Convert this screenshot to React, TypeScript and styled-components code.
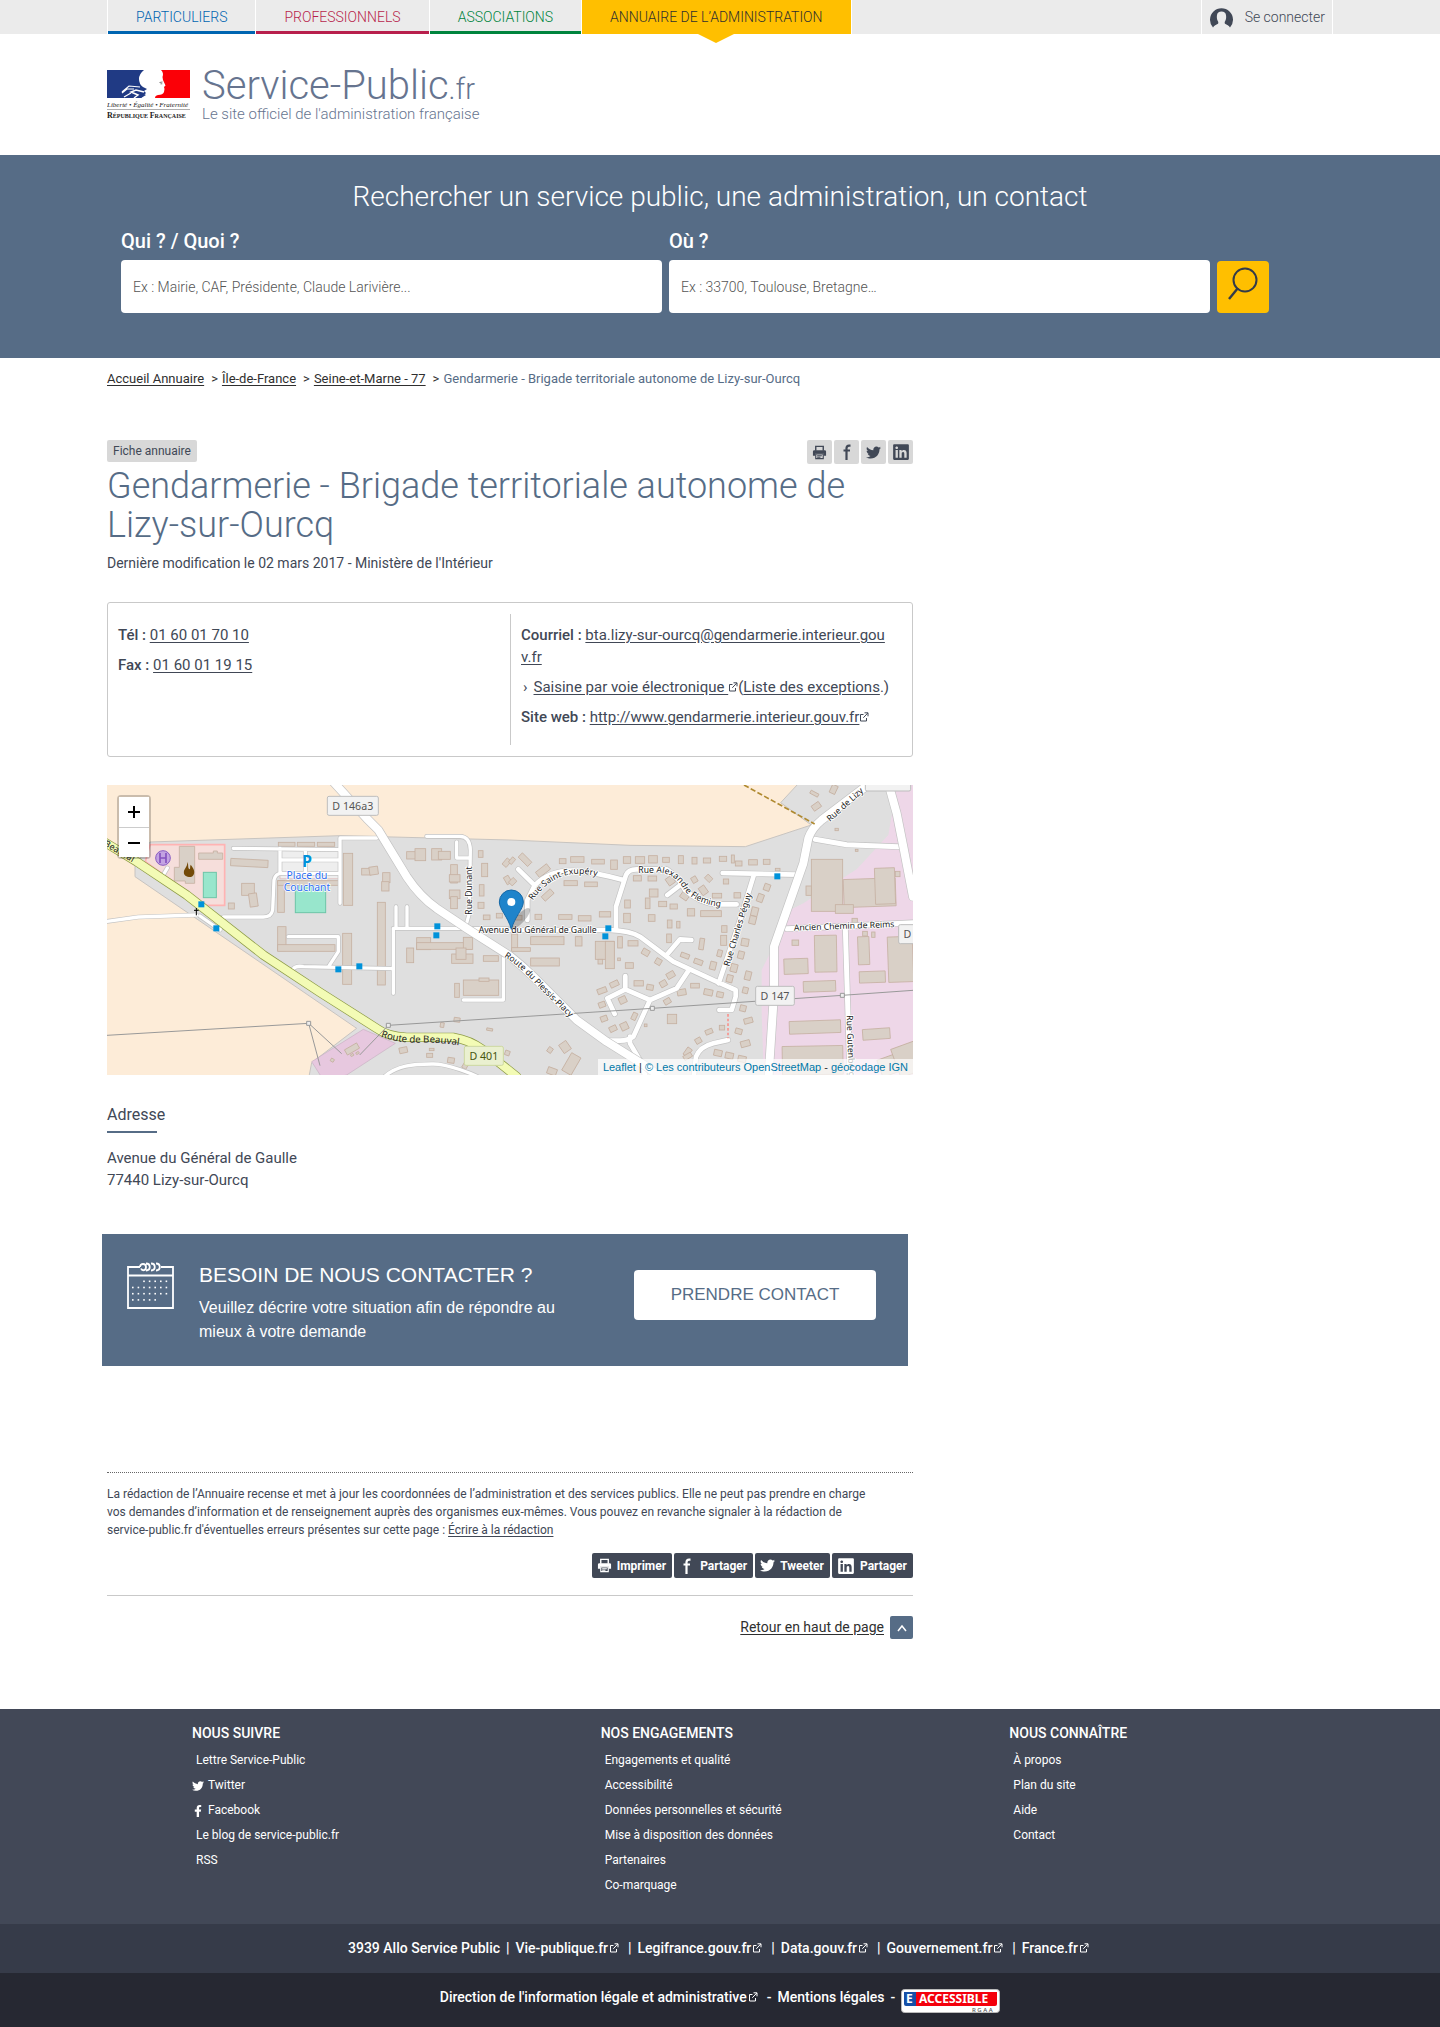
import React from "react";
import styled, { createGlobalStyle, css } from "styled-components";
import { FaFacebookF, FaTwitter, FaLinkedin } from "react-icons/fa";

const color = {
  slate: "#566c86",
  ink: "#414856",
  dark: "#2f2f2f",
  yellow: "#ffbf00",
  grey: "#ebebeb",
  line: "#c9c9c9",
};

const GlobalStyle = createGlobalStyle`
  *, *::before, *::after { box-sizing: border-box; }
  body {
    margin: 0;
    background: #fff;
    color: ${color.ink};
    font-family: Roboto, "Liberation Sans", sans-serif;
    font-size: 15px;
    line-height: 22px;
  }
  a { color: inherit; }
  h1, h2, h3, p, ul, ol { margin: 0; padding: 0; font-weight: 400; }
  ul, ol { list-style: none; }
  button, input { font-family: inherit; }
`;

const Container = styled.div`
  max-width: 1226px;
  margin: 0 auto;
`;

/* ---------- top bar ---------- */

const TopBar = styled.nav`
  background: ${color.grey};
`;
const TopBarInner = styled(Container)`
  display: flex;
  justify-content: space-between;
  height: 34px;
`;
const Tabs = styled.ul`
  display: flex;
  border-left: 1px solid #fff;
`;
const Tab = styled.li<{ $tone: string; $active?: boolean }>`
  position: relative;
  border-right: 1px solid #fff;
  a {
    display: block;
    height: 34px;
    padding: 0 28px;
    border-bottom: 3px solid ${(p) => p.$tone};
    color: ${(p) => p.$tone};
    font-size: 14px;
    font-weight: 300;
    line-height: 34px;
    text-decoration: none;
    text-transform: uppercase;
  }
  ${(p) =>
    p.$active &&
    css`
      a {
        background: ${color.yellow};
        color: ${color.dark};
      }
      &::after {
        content: "";
        position: absolute;
        top: 100%;
        left: 50%;
        margin-left: -18px;
        border: 18px solid transparent;
        border-top: 9px solid ${color.yellow};
        border-bottom: 0;
      }
    `}
`;
const Login = styled.a`
  display: flex;
  align-items: center;
  gap: 12px;
  padding: 0 7px 0 8px;
  border: solid #fff;
  border-width: 0 1px;
  font-size: 14px;
  font-weight: 300;
  text-decoration: none;
`;

/* ---------- header ---------- */

const HeaderInner = styled(Container)`
  display: flex;
  align-items: flex-start;
  gap: 12px;
  padding: 36px 0 29px;
`;
const BrandLink = styled.a`
  color: #66748f;
  font-weight: 300;
  text-decoration: none;
`;
const BrandName = styled.span`
  display: block;
  height: 32px;
  font-size: 40px;
  line-height: 32px;
  small {
    font-size: 29px;
    line-height: 1;
  }
`;
const BrandTag = styled.span`
  display: block;
  font-size: 15px;
  line-height: 24px;
`;

/* ---------- search ---------- */

const SearchBand = styled.section`
  background: ${color.slate};
  color: #fff;
`;
const SearchInner = styled(Container)`
  padding: 24px 64px 45px 14px;
`;
const SearchTitle = styled.h2`
  padding-left: 50px;
  font-size: 28px;
  font-weight: 300;
  line-height: 36px;
  text-align: center;
`;
const SearchForm = styled.form`
  display: flex;
  align-items: flex-end;
  gap: 7px;
  margin-top: 13px;
`;
const Field = styled.div`
  flex: 1;
  label {
    display: block;
    margin-bottom: 6px;
    font-size: 20px;
    font-weight: 500;
    line-height: 26px;
  }
  input {
    display: block;
    width: 100%;
    height: 53px;
    padding: 0 12px;
    border: 0;
    border-radius: 4px;
    background: #fff;
    font-size: 14px;
    font-weight: 300;
  }
  input::placeholder {
    color: #555;
    opacity: 1;
  }
`;
const SearchButton = styled.button`
  display: grid;
  place-items: center;
  width: 52px;
  height: 52px;
  padding: 0 0 6px;
  border: 0;
  border-radius: 4px;
  background: ${color.yellow};
  color: #333b49;
`;

/* ---------- breadcrumb ---------- */

const Breadcrumb = styled.nav`
  padding-top: 12px;
  ol {
    display: flex;
    flex-wrap: wrap;
  }
  li {
    color: ${color.slate};
    font-size: 13px;
    line-height: 18px;
  }
  li + li::before {
    content: ">";
    padding: 0 4px 0 7px;
    color: ${color.dark};
  }
  a {
    color: ${color.dark};
    text-underline-offset: 2px;
  }
`;

/* ---------- main article ---------- */

const Article = styled.main`
  max-width: 806px;
  padding: 52px 0 70px;
`;
const TagRow = styled.div`
  display: flex;
  align-items: flex-start;
  justify-content: space-between;
`;
const Badge = styled.span`
  padding: 0 6px;
  border-radius: 2px;
  background: #d8d8d8;
  font-size: 12px;
`;
const IconRow = styled.ul`
  display: flex;
  gap: 2px;
`;
const IconButton = styled.button`
  display: grid;
  place-items: center;
  width: 25px;
  height: 24px;
  padding: 0;
  border: 0;
  border-radius: 2px;
  background: #d8d8d8;
  color: ${color.ink};
`;
const Title = styled.h1`
  margin-top: 3px;
  color: ${color.slate};
  font-size: 36px;
  font-weight: 300;
  line-height: 39px;
`;
const Meta = styled.p`
  margin-top: 8px;
  font-size: 14px;
  line-height: 20px;
`;

const ContactCard = styled.section`
  display: grid;
  grid-template-columns: 1fr 1fr;
  margin-top: 29px;
  padding: 11px 0;
  border: 1px solid ${color.line};
  border-radius: 3px;
`;
const ContactList = styled.ul`
  display: flex;
  flex-direction: column;
  gap: 8px;
  min-height: 131px;
  padding: 10px 22px 10px 10px;
  & + & {
    border-left: 1px solid ${color.line};
  }
  strong {
    font-weight: 500;
  }
  a {
    text-underline-offset: 2px;
  }
`;
const Email = styled.a`
  word-break: break-all;
`;
const ArrowItem = styled.li`
  white-space: nowrap;
  &::before {
    content: "›";
    padding: 0 6px 0 2px;
  }
`;

const MapFrame = styled.section`
  position: relative;
  margin-top: 28px;
  overflow: hidden;
  aspect-ratio: 806 / 290;
  svg.tiles {
    display: block;
    width: 100%;
    height: 100%;
  }
`;
const ZoomControl = styled.div`
  position: absolute;
  top: 10px;
  left: 10px;
  border: 2px solid rgba(0, 0, 0, 0.2);
  border-radius: 4px;
`;
const ZoomButton = styled.button`
  display: grid;
  place-items: center;
  width: 30px;
  height: 30px;
  padding: 0;
  border: 0;
  background: #fff;
  color: #000;
  & + & {
    border-top: 1px solid #ccc;
  }
`;
const Attribution = styled.p`
  position: absolute;
  right: 0;
  bottom: 0;
  padding: 0 5px;
  background: rgba(255, 255, 255, 0.7);
  color: #333;
  font: 11px/16px "Liberation Sans", Arial, sans-serif;
  a {
    color: #0078a8;
    text-decoration: none;
  }
`;

const AddressTitle = styled.h2`
  margin-top: 30px;
  font-size: 16px;
  line-height: 20px;
  &::after {
    content: "";
    display: block;
    width: 50px;
    height: 2px;
    margin-top: 6px;
    background: ${color.slate};
  }
`;
const Address = styled.p`
  margin-top: 14px;
`;

const Banner = styled.section`
  display: flex;
  align-items: flex-start;
  margin: 43px 5px 0 -5px;
  padding: 28px 32px 22px 24px;
  background: ${color.slate};
  color: #fff;
  font-family: "Liberation Sans", Arial, sans-serif;
`;
const BannerText = styled.div`
  flex: 1;
  padding: 1px 60px 0 24px;
  h2 {
    font-size: 21px;
    line-height: 24px;
  }
  p {
    margin-top: 9px;
    font-size: 16px;
    line-height: 24px;
  }
`;
const BannerButton = styled.button`
  width: 242px;
  height: 50px;
  margin-top: 8px;
  border: 0;
  border-radius: 4px;
  background: #fff;
  color: ${color.slate};
  font-size: 17px;
`;

const Notice = styled.p`
  margin-top: 106px;
  padding: 12px 34px 0 0;
  border-top: 1px dotted #666;
  font-size: 12px;
  line-height: 18px;
  a {
    text-underline-offset: 2px;
  }
`;
const ShareRow = styled.ul`
  display: flex;
  justify-content: flex-end;
  gap: 2px;
  margin-top: 14px;
  padding-bottom: 17px;
  border-bottom: 1px solid ${color.line};
`;
const ShareButton = styled.button`
  display: flex;
  align-items: center;
  gap: 5px;
  height: 25px;
  padding: 0 6px 0 5px;
  border: 0;
  border-radius: 2px;
  background: ${color.ink};
  color: #fff;
  font-size: 12px;
  font-weight: 700;
`;
const BackTop = styled.a`
  display: flex;
  align-items: center;
  justify-content: flex-end;
  gap: 6px;
  margin-top: 20px;
  color: ${color.dark};
  font-size: 14px;
  line-height: 23px;
  text-underline-offset: 2px;
`;
const BackTopIcon = styled.span`
  display: grid;
  place-items: center;
  width: 23px;
  height: 23px;
  border-radius: 2px;
  background: ${color.slate};
  color: #fff;
`;

/* ---------- footer ---------- */

const FooterLinks = styled.div`
  background: #424857;
  color: #fff;
`;
const FooterGrid = styled(Container)`
  display: grid;
  grid-template-columns: repeat(3, 1fr);
  padding: 14px 0 26px;
`;
const FooterColumn = styled.section`
  padding-left: 85px;
  h3 {
    font-size: 14px;
    font-weight: 500;
    line-height: 20px;
    text-transform: uppercase;
  }
  ul {
    margin-top: 5px;
  }
  li {
    font-size: 12px;
    line-height: 25px;
  }
  a {
    display: flex;
    align-items: center;
    gap: 4px;
    text-decoration: none;
  }
`;
const LinkGlyph = styled.span`
  display: grid;
  place-items: center;
  width: 12px;
`;
const PlainLabel = styled.span`
  padding-left: 4px;
`;
const FooterBar = styled.div<{ $bg: string; $pad: string }>`
  display: flex;
  flex-wrap: wrap;
  align-items: flex-start;
  justify-content: center;
  gap: 6px;
  padding: ${(p) => p.$pad};
  background: ${(p) => p.$bg};
  color: #fff;
  font-size: 14px;
  font-weight: 500;
  line-height: 24px;
  a {
    text-decoration: none;
  }
  a > svg {
    margin: 0 3px 0 1px;
  }
`;
const BadgeLink = styled.a`
  padding-top: 4px;
  && > svg {
    display: block;
    margin: 0;
  }
`;

/* ---------- icons ---------- */

const Ext = ({ size = 10 }: { size?: number }) => (
  <svg width={size} height={size} viewBox="0 0 10 10" fill="none" stroke="currentColor" aria-hidden="true">
    <path d="M4.5 2.5H1.5v6.500h6V6M5.500.8H9v3.500M8.800 1L4.300 5.800" />
  </svg>
);

const PrintIcon = ({ size = 15 }: { size?: number }) => (
  <svg width={size} height={size} viewBox="0 0 16 16" fill="none" stroke="currentColor" aria-hidden="true">
    <path d="M4 6V1.500h8V6" strokeWidth="1.500" />
    <path d="M2.500 5.500h11A1.500 1.500 0 0 1 15 7v4.500h-2.500V9h-9v2.500H1V7a1.500 1.500 0 0 1 1.500-1.500z" fill="currentColor" stroke="none" />
    <path d="M4 9.500h8v5H4zM5.500 11.500h5M5.500 13h3.500" strokeWidth="1.200" />
  </svg>
);

const FacebookIcon = ({ size = 16 }: { size?: number }) => (
  <svg width={size} height={size} viewBox="0 0 16 16" fill="none" stroke="currentColor" strokeWidth="2.200" aria-hidden="true">
    <path d="M11.500 1.600H10Q7.500 1.600 7.500 4.200V16M4.500 6.500h6.500" />
  </svg>
);

const UserIcon = () => (
  <svg width="23" height="21" viewBox="0 0 23 21" aria-hidden="true">
    <path
      d="M3 20.500A11.500 11.500 0 1 1 20 20.500c-1-2-3.200-2.800-5-3.800-.5-.6-.4-1.700.2-2.600 1-2 1-3.700.9-5.300C16 5.800 14 4.500 11.500 4.500S7 5.800 6.900 8.800c-.1 1.600-.1 3.300.9 5.300.6.900.7 2 .2 2.600-1.800 1-4 1.800-5 3.800z"
      fill={color.ink}
    />
  </svg>
);

const SearchIcon = () => (
  <svg width="32" height="36" viewBox="0 0 32 36" fill="none" stroke="currentColor" strokeWidth="2" aria-hidden="true">
    <circle cx="18" cy="14" r="11.500" />
    <path d="M11 22L2 33" strokeWidth="2.400" />
  </svg>
);

const CalendarIcon = () => {
  const dots: React.ReactElement[] = [];
  for (let r = 0; r < 4; r++)
    for (let c = 0; c < 7; c++) {
      if ((r === 0 && c < 2) || (r === 3 && c > 4)) continue;
      dots.push(<rect key={`${r}-${c}`} x={6 + c * 5.6} y={18.500 + r * 6.2} width="1.600" height="1.600" />);
    }
  return (
    <svg width="49" height="48" viewBox="0 0 49 48" fill="none" stroke="#fff" strokeWidth="1.800" aria-hidden="true">
      <path d="M14 5H2v41h45V5H35M2 13.500h45" />
      <path d="M14 5c0-4 6-4 6 0s-4 4-5 1.500M20 1.500c5 0 5 7 0 7M25 1.500c5 0 5 7 0 7M30 1.500c5 0 5 7 0 7" />
      <g fill="#fff" stroke="none">{dots}</g>
    </svg>
  );
};

const FlagLogo = () => (
  <svg width="83" height="50" viewBox="0 0 83 50" role="img" aria-label="République Française">
    <path d="M0 0h37Q32 4 32 9Q32 14 36 17L40 19 37 21 39 23 34 28H0z" fill="#203a84" />
    <g fill="none" stroke="#fff">
      <path d="M33 17L22 16 15 22M27 19L20 19 15 23M24 23L17 27" strokeWidth="1.200" />
      <path d="M37 22L29 20 24 22 31 25 27 28" strokeWidth="1.500" />
    </g>
    <path d="M35 23l4 2-5 3h-4z" fill="#203a84" />
    <path d="M54 0Q57 3 55.500 7L56 10 58.500 15.500 57 17 57.500 19 57 22Q56 25 51 25Q48 25.500 48 28H83V0z" fill="#fb0007" />
    <path d="M52.500 12.500l3-.5M53.500 13.800h1.800" stroke="#444" strokeWidth=".7" />
    <g fontFamily="Liberation Serif, serif" fill="#222">
      <text x="0" y="36.500" fontSize="7" fontStyle="italic">Liberté • Égalité • Fraternité</text>
      <text x="0" y="48" fontSize="8" fontWeight="700">
        R<tspan fontSize="6">ÉPUBLIQUE </tspan>F<tspan fontSize="6">RANÇAISE</tspan>
      </text>
    </g>
    <path d="M0 39.500h83" stroke="#999" strokeWidth=".8" />
  </svg>
);

const RgaaBadge = () => (
  <svg width="99" height="24" viewBox="0 0 99 24" role="img" aria-label="E-accessible RGAA">
    <rect x=".5" y=".5" width="98" height="23" rx="3" fill="#fff" stroke="#bbb" />
    <path d="M3 3h12v14H5a2 2 0 0 1-2-2z" fill="#1650a8" />
    <path d="M15 3h81v12a2 2 0 0 1-2 2H15z" fill="#f4000c" />
    <g fontFamily="Noto Sans, sans-serif" fill="#fff" fontWeight="700" fontSize="12">
      <text x="5" y="14">E</text>
      <text x="18" y="14">ACCESSIBLE</text>
    </g>
    <text x="71" y="22.500" fontFamily="Noto Sans, sans-serif" fontSize="6" fill="#555">R G A A</text>
  </svg>
);

/* ---------- map drawing ---------- */

/* [x, y, width, height, rotation] */
type Box = [number, number, number, number, number?];

const westBuildings: Box[] = [
  [535, 187, 50, 12], [592, 187, 52, 12], [652, 187, 52, 12],
  [392, 238, 112, 22, 3], [730, 220, 28, 156], [533, 302, 20, 95], [533, 302, 185, 14],
  [728, 460, 27, 153], [832, 367, 24, 248], [533, 440, 25, 72], [533, 494, 172, 20],
  [425, 310, 38, 36], [448, 340, 24, 40, -8], [385, 369, 18, 18],
  [785, 265, 28, 20], [808, 260, 26, 24, -8], [848, 278, 22, 30], [845, 305, 22, 28],
  [920, 215, 50, 22], [945, 206, 32, 36], [995, 206, 30, 34], [1015, 214, 36, 24],
  [1052, 254, 20, 55], [1048, 284, 32, 22], [1048, 330, 32, 26], [1052, 350, 20, 36],
  [1135, 212, 14, 20], [1145, 250, 18, 40], [1138, 314, 14, 34], [1134, 367, 18, 18],
  [1150, 405, 20, 14], [1189, 400, 18, 14], [1212, 236, 16, 24, 40], [1215, 288, 16, 24, -30],
  [920, 504, 21, 44], [950, 473, 42, 36], [950, 488, 165, 20], [1090, 472, 28, 36],
  [1055, 522, 64, 28], [1068, 504, 30, 34], [1150, 527, 45, 17], [1090, 600, 106, 46],
  [1064, 610, 14, 42], [1137, 594, 30, 10], [1062, 713, 18, 13, 8], [1021, 728, 11, 14, 8],
  [1160, 745, 18, 7, 10], [898, 802, 24, 17, -12], [980, 820, 18, 12], [1043, 833, 20, 16, 8],
  [1088, 850, 14, 16, 30], [988, 805, 14, 7], [735, 798, 42, 18, -30], [692, 836, 10, 9, 30],
  [752, 822, 9, 6, -30], [768, 816, 9, 6, -30], [1215, 812, 14, 14, 20],
];

const eastBuildings: Box[] = [
  [25, 230, 40, 18, 45], [78, 262, 42, 20, -38], [95, 336, 36, 18, -42], [0, 232, 12, 20, 40], [0, 295, 16, 20, 45],
  [148, 236, 20, 15], [182, 230, 40, 17], [245, 238, 38, 14], [302, 240, 20, 28], [340, 230, 22, 20],
  [376, 230, 28, 20], [416, 227, 26, 22], [458, 232, 20, 15], [505, 227, 15, 24], [546, 232, 15, 20], [580, 234, 22, 15],
  [628, 229, 22, 15], [664, 225, 9, 24], [676, 243, 20, 15], [716, 239, 26, 16], [760, 238, 20, 15],
  [162, 302, 40, 15], [224, 306, 38, 14], [370, 287, 24, 16], [414, 288, 26, 15], [470, 290, 22, 24, -35],
  [512, 338, 24, 20, 35], [545, 290, 16, 18, -30], [570, 318, 20, 26, -35], [588, 285, 16, 20, -45],
  [607, 340, 28, 14], [640, 297, 16, 15], [672, 338, 20, 16], [418, 327, 26, 24], [406, 354, 14, 32],
  [446, 364, 24, 16], [480, 372, 22, 15], [532, 386, 22, 22], [572, 392, 62, 18], [344, 360, 17, 24], [341, 400, 20, 28],
  [268, 395, 34, 16], [75, 403, 20, 15], [146, 404, 40, 14], [205, 407, 38, 16], [16, 406, 20, 14],
  [415, 404, 20, 20], [472, 420, 14, 24], [500, 424, 10, 20], [470, 462, 14, 26], [568, 475, 14, 34, 8],
  [762, 312, 18, 20, 20], [742, 342, 18, 24, 20], [724, 382, 20, 26, 14], [718, 408, 20, 24, 14],
  [635, 437, 16, 20], [632, 466, 18, 30], [622, 510, 14, 20, 14], [600, 545, 18, 24, 14], [694, 476, 22, 22, 10],
  [684, 514, 18, 22, 14], [662, 552, 20, 24, 14], [650, 585, 18, 22, 14], [705, 574, 18, 26, 14], [698, 622, 16, 18, 14],
  [690, 676, 18, 18, 14], [5, 462, 18, 50], [5, 503, 56, 11], [62, 470, 100, 24], [62, 534, 86, 24],
  [196, 470, 20, 28], [256, 484, 56, 54], [286, 484, 27, 82], [264, 538, 14, 14], [323, 470, 14, 34],
  [354, 482, 30, 16], [396, 508, 22, 18, 30], [436, 536, 18, 18, 30], [346, 548, 24, 17], [512, 520, 26, 14, 20],
  [552, 538, 26, 15, 20], [300, 604, 26, 16, -25], [262, 624, 28, 16, -20], [266, 666, 20, 16, -20],
  [272, 708, 20, 16, -20], [327, 650, 22, 20, -25], [372, 602, 28, 16], [410, 614, 20, 16, 10], [450, 602, 20, 18, -30],
  [470, 576, 24, 18, -30], [502, 628, 26, 18, -10], [542, 610, 26, 14], [582, 628, 26, 18, 12], [620, 636, 20, 16, 12],
  [462, 656, 20, 16, -30], [366, 698, 14, 22, 25], [298, 738, 22, 16, -25], [332, 728, 22, 22, -25], [472, 703, 28, 28],
  [586, 748, 22, 14, -22], [556, 774, 18, 16, -30], [525, 803, 16, 26, 35], [520, 822, 26, 14, -30], [628, 736, 16, 14],
  [702, 714, 26, 16, -15], [676, 746, 20, 16, 15], [692, 782, 28, 18, -15], [612, 810, 24, 18, 12], [646, 818, 24, 18, 12],
  [684, 828, 24, 18, 12], [152, 786, 26, 30, -35], [168, 822, 32, 60, 30], [113, 802, 14, 16, 35], [112, 864, 28, 20, 20],
  [904, 238, 94, 156], [1001, 296, 156, 84, -2], [1095, 264, 60, 108, -2], [888, 318, 16, 28], [976, 374, 54, 26],
  [914, 466, 66, 110, -1], [822, 536, 72, 46, -2], [880, 603, 97, 32, -2], [1044, 470, 34, 84, -2], [1048, 574, 78, 34, -2],
  [1134, 470, 75, 136, -2], [838, 722, 154, 38, -2], [817, 798, 182, 86, -1], [1058, 746, 82, 32, -4],
  [1108, 830, 56, 54, -20], [1155, 792, 80, 90, -20], [846, 480, 20, 16], [900, 36, 26, 10, 28], [962, 15, 18, 26, 25],
  [906, 70, 26, 18, -35], [1036, 208, 8, 6], [975, 145, 10, 7], [1026, 415, 16, 16], [1156, 274, 14, 16],
  [796, 265, 14, 8], [403, 732, 8, 8], [323, 534, 8, 8], [1058, 454, 14, 14], [1085, 456, 10, 16],
];

const Buildings = ({ items }: { items: Box[] }) => (
  <g fill="#d9d0c7" stroke="#c6b1a2" strokeWidth="2.500">
    {items.map(([x, y, w, h, r = 0], i) => (
      <rect key={i} x={x} y={y} width={w} height={h} transform={r ? `rotate(${r} ${x + w / 2} ${y + h / 2})` : undefined} />
    ))}
  </g>
);

const minorRoads = [
  "M21 424L115 411L290 405",
  "M300 408L360 450L370 414L370 411H490Q514 411 518 390L522 300Q526 280 545 280H720",
  "M400 205L720 209M540 205V280M616 209V280M540 240H720M720 370V174H830",
  "M565 470H715V515L688 556",
  "M580 566Q590 556 610 560L880 566M880 640V445H1090M888 380V445M921 380V445",
  "M980 169H1080Q1110 170 1111 210L1108 400L1098 436M1070 186V234H1108",
  "M1090 660H1210V530M1100 446H1238M188 288L202 264",
  "M840 905C880 850 960 852 1000 852S1120 880 1150 900",
];
const streets = [
  "M1230 450H1530Q1590 452 1620 470L1720 545L1850 605L1907 630V650L1895 690H1858",
  "M1255 268L1304 316L1282 360V420M1304 316Q1350 270 1420 272Q1490 278 1570 300",
  "M1548 448V380L1578 285Q1585 268 1610 268H1700Q1735 290 1755 330Q1800 370 1850 373H1910",
  "M1702 345L1745 312M1868 279L2090 284M1962 284L1920 420L1856 610",
  "M1700 525L1740 478L1774 480",
  "M1764 574L1730 625L1650 660L1600 770Q1585 782 1560 782H1510M1650 660L1576 628L1522 655L1544 702M1576 630V588",
  "M1590 770V790L1622 845L1640 900M1884 780L1840 790Q1800 800 1788 830L1780 900",
];
const mainRoads = [
  "M695 0L800 115L835 150L920 290Q960 350 1010 385L1100 445L1230 528Q1270 560 1300 590L1430 720L1520 785L1640 860L1700 905",
  "M2310 10L2165 120Q2135 145 2125 175L2110 250L2022 500V640L2005 900",
];
const sideRoads = [
  "M2145 178L2240 194L2395 200",
  "M2060 446L2180 441L2439 428M2236 446L2250 900",
];

const Road = ({ d, width, fill = "#fff", edge = "#c3c3c3" }: { d: string[]; width: number; fill?: string; edge?: string }) => (
  <g fill="none" strokeLinecap="round" strokeLinejoin="round">
    <path d={d.join("")} stroke={edge} strokeWidth={width + 4} />
    <path d={d.join("")} stroke={fill} strokeWidth={width} />
  </g>
);

const shields: [string, number, number, number, boolean?][] = [
  ["D 146a3", 682, 49, 153],
  ["D 401", 1093, 799, 117, true],
  ["D 147", 1967, 619, 116],
  ["D 147E", 2296, -24, 136],
  ["D 147", 2396, 434, 116],
];

const stops = [
  [295, 364], [340, 436], [1003, 430], [1000, 457], [706, 559], [769, 550], [1516, 436], [1507, 460], [2023, 280],
];

const MapTiles = () => (
  <svg className="tiles" viewBox="21 15 2418 870" preserveAspectRatio="xMidYMid slice" role="img" aria-label="Plan de Lizy-sur-Ourcq">
    <defs>
      <path id="saint-exupery" d="M1298 362Q1330 315 1375 294T1490 288" />
      <path id="fleming" d="M1615 278H1670Q1725 278 1752 330Q1790 375 1875 382" />
      <path id="plessis" d="M1212 530Q1260 560 1300 604T1420 722" />
      <path id="beauval" d="M842 770Q900 790 960 788T1100 800" />
      <path id="beauval-west" d="M10 196L112 256" />
    </defs>
    <rect x="0" y="0" width="2500" height="900" fill="#dfdfdf" />
    <g stroke="#c8c4c0" strokeWidth="3">
      <path d="M0 0H2105L2042 68L2134 135L1936 200L1590 196L1230 180L720 167L150 186L112 250L0 175z" fill="#fdecd8" />
      <path d="M0 180L105 250V290L770 745L635 848L625 900H0z" fill="#fdecd8" />
    </g>
    <path d="M2450 0H2370L2378 90L2365 165L2270 268L2110 370L2050 400L2020 500L1985 570V700L1992 900H2450z" fill="#eed7e8" />
    <path d="M635 845L790 748L886 790L740 885L670 900z" fill="#e7c8df" stroke="#c9b0c3" strokeWidth="2" />
    <path d="M150 194H374V376H320L136 245z" fill="#f6dedb" stroke="#ffb3b3" strokeWidth="5" />
    <path d="M540 209H718V296H540z" fill="#eee" stroke="#e0b7b7" strokeWidth="2" />
    <path d="M238 199H284V310H256V303H223V262H238zM296 219H340V213H352V219H368V238H296z" fill="#d9d0c7" stroke="#c6b1a2" strokeWidth="2.500" />
    <g fill="#98e6cc" stroke="#6cc5a7" strokeWidth="3">
      <rect x="310" y="277" width="39" height="76" />
      <rect x="586" y="316" width="91" height="82" />
    </g>
    <Buildings items={westBuildings} />
    <g transform="translate(1230 0)">
      <Buildings items={eastBuildings} />
    </g>
    <Road d={minorRoads} width={10} />
    <Road d={streets} width={14} />
    <Road d={sideRoads} width={15} />
    <Road d={["M2365 10L2390 100L2410 200L2439 350"]} width={24} />
    <Road d={mainRoads} width={24} />
    <Road d={["M0 178L110 245L260 345L490 525L660 637L830 745Q860 768 920 772L1060 772Q1110 780 1150 810L1250 890"]} width={24} fill="#f3fbb5" edge="#8d9b45" />
    <g fill="none" stroke="#999" strokeWidth="3">
      <path d="M21 766L626 730L725 821M626 730L660 857M779 825L865 736L1657 685L2227 646L2439 631" />
      <path d="M620 724h12v12h-12zM859 730h12v12h-12zM1651 679h12v12h-12zM2221 640h12v12h-12z" fill="#eee" />
    </g>
    <path d="M1932 15L2144 132" stroke="#b08a30" strokeWidth="5" strokeDasharray="16 7" />
    <path d="M1884 702V775" stroke="#ff8078" strokeWidth="4" strokeDasharray="8 6" />
    {stops.map(([x, y]) => (
      <rect key={`${x}-${y}`} x={x} y={y} width="18" height="18" fill="#0092da" />
    ))}
    <path d="M289 384v22M282 391h14" stroke="#000" strokeWidth="3" />
    <path d="M262 246c5 10 0 18 7 22 3-4 0-8 3-14 10 12 14 22 8 32-5 6-9 5-13 5-12-1-17-9-15-18 2-8 10-12 10-27z" fill="#734a08" />
    <circle cx="189" cy="234" r="22" fill="#c3a3e2" stroke="#8a5cc2" strokeWidth="3" />
    <path d="M180 219v30M198 219v30M180 234h18" stroke="#8552bf" strokeWidth="5" />
    <g fontFamily="Noto Sans, sans-serif" fontSize="26" fill="#222" stroke="#fff" strokeWidth="5" paintOrder="stroke" strokeLinejoin="round">
      <text><textPath href="#saint-exupery">Rue Saint-Exupéry</textPath></text>
      <text><textPath href="#fleming">Rue Alexandre Fleming</textPath></text>
      <text><textPath href="#plessis">Route du Plessis-Placy</textPath></text>
      <text stroke="none" fontSize="29"><textPath href="#beauval">Route de Beauval</textPath></text>
      <text stroke="none" fontSize="27"><textPath href="#beauval-west">Beauval</textPath></text>
      <text x="1136" y="458">Avenue du Général de Gaulle</text>
      <text transform="translate(1116 404) rotate(-90)">Rue Dunant</text>
      <text transform="translate(1888 560) rotate(-73)">Rue Charles Péguy</text>
      <text transform="translate(2190 126) rotate(-42)">Rue de Lizy</text>
      <text transform="translate(2082 452) rotate(-2)">Ancien Chemin de Reims</text>
      <text transform="translate(2240 706) rotate(88)">Rue Gutenberg</text>
    </g>
    <g fontFamily="Noto Sans, sans-serif" textAnchor="middle" fill="#2d6cf0" stroke="#fff" strokeWidth="4" paintOrder="stroke">
      <text x="621" y="298" fontSize="31">Place du</text>
      <text x="621" y="334" fontSize="31">Couchant</text>
      <text x="621" y="262" fontSize="48" fontWeight="700" fill="#0092da" stroke="none">P</text>
    </g>
    {shields.map(([label, x, y, w, green], i) => (
      <g key={i}>
        <rect x={x} y={y} width={w} height="57" rx="5" fill={green ? "#eaf0d0" : "#f2f2f2"} stroke={green ? "#cdd8a0" : "#bdbdbd"} strokeWidth="3" />
        <text x={x + w / 2} y={y + 40} textAnchor="middle" fontFamily="Noto Sans, sans-serif" fontSize="32" fill={green ? "#47560f" : "#555"}>
          {label}
        </text>
      </g>
    ))}
    <ellipse cx="1262" cy="415" rx="40" ry="13" transform="rotate(-48 1262 415)" fill="#000" opacity=".22" />
    <path d="M1234 448C1224 410 1198 388 1198 366a36 36 0 0 1 72 0C1270 388 1244 410 1234 448z" fill="#1f84cb" stroke="#1668a6" strokeWidth="3" />
    <circle cx="1234" cy="366" r="12" fill="#fff" />
  </svg>
);

/* ---------- page data ---------- */

const tabs = [
  { label: "Particuliers", tone: "#0065b1" },
  { label: "Professionnels", tone: "#b81f4c" },
  { label: "Associations", tone: "#00843d" },
  { label: "Annuaire de l’administration", tone: color.yellow, active: true },
];

const shares = [
  { label: "Imprimer", icon: <PrintIcon /> },
  { label: "Partager", icon: <FacebookIcon /> },
  { label: "Tweeter", icon: <FaTwitter size={15} /> },
  { label: "Partager", icon: <FaLinkedin size={18} /> },
];

const columns: { title: string; links: { label: string; icon?: React.ReactElement }[] }[] = [
  {
    title: "Nous suivre",
    links: [
      { label: "Lettre Service-Public" },
      { label: "Twitter", icon: <FaTwitter size={12} /> },
      { label: "Facebook", icon: <FaFacebookF size={12} /> },
      { label: "Le blog de service-public.fr" },
      { label: "RSS" },
    ],
  },
  {
    title: "Nos engagements",
    links: [
      { label: "Engagements et qualité" },
      { label: "Accessibilité" },
      { label: "Données personnelles et sécurité" },
      { label: "Mise à disposition des données" },
      { label: "Partenaires" },
      { label: "Co-marquage" },
    ],
  },
  {
    title: "Nous connaître",
    links: [{ label: "À propos" }, { label: "Plan du site" }, { label: "Aide" }, { label: "Contact" }],
  },
];

const partners = ["Vie-publique.fr", "Legifrance.gouv.fr", "Data.gouv.fr", "Gouvernement.fr", "France.fr"];

export default function App() {
  return (
    <>
      <GlobalStyle />
      <TopBar>
        <TopBarInner>
          <Tabs>
            {tabs.map((t) => (
              <Tab key={t.label} $tone={t.tone} $active={t.active}>
                <a href="#">{t.label}</a>
              </Tab>
            ))}
          </Tabs>
          <Login href="#">
            <UserIcon />
            Se connecter
          </Login>
        </TopBarInner>
      </TopBar>

      <header>
        <HeaderInner>
          <FlagLogo />
          <BrandLink href="#">
            <BrandName>
              Service-Public<small>.fr</small>
            </BrandName>
            <BrandTag>Le site officiel de l'administration française</BrandTag>
          </BrandLink>
        </HeaderInner>
      </header>

      <SearchBand>
        <SearchInner>
          <SearchTitle>Rechercher un service public, une administration, un contact</SearchTitle>
          <SearchForm onSubmit={(e) => e.preventDefault()}>
            <Field>
              <label htmlFor="who">Qui ? / Quoi ?</label>
              <input id="who" placeholder="Ex : Mairie, CAF, Présidente, Claude Larivière..." />
            </Field>
            <Field>
              <label htmlFor="where">Où ?</label>
              <input id="where" placeholder="Ex : 33700, Toulouse, Bretagne…" />
            </Field>
            <SearchButton type="submit" aria-label="Rechercher">
              <SearchIcon />
            </SearchButton>
          </SearchForm>
        </SearchInner>
      </SearchBand>

      <Container>
        <Breadcrumb aria-label="Fil d’Ariane">
          <ol>
            <li><a href="#">Accueil Annuaire</a></li>
            <li><a href="#">Île-de-France</a></li>
            <li><a href="#">Seine-et-Marne - 77</a></li>
            <li>Gendarmerie - Brigade territoriale autonome de Lizy-sur-Ourcq</li>
          </ol>
        </Breadcrumb>

        <Article>
          <TagRow>
            <Badge>Fiche annuaire</Badge>
            <IconRow>
              {shares.map((s, i) => (
                <li key={i}>
                  <IconButton type="button" aria-label={s.label}>{s.icon}</IconButton>
                </li>
              ))}
            </IconRow>
          </TagRow>
          <Title>Gendarmerie - Brigade territoriale autonome de Lizy-sur-Ourcq</Title>
          <Meta>Dernière modification le 02 mars 2017 - Ministère de l'Intérieur</Meta>

          <ContactCard>
            <ContactList>
              <li><strong>Tél :</strong> <a href="#">01 60 01 70 10</a></li>
              <li><strong>Fax :</strong> <a href="#">01 60 01 19 15</a></li>
            </ContactList>
            <ContactList>
              <li>
                <strong>Courriel :</strong> <Email href="#">bta.lizy-sur-ourcq@gendarmerie.interieur.gouv.fr</Email>
              </li>
              <ArrowItem>
                <a href="#">Saisine par voie électronique <Ext /></a>
                (<a href="#">Liste des exceptions</a>.)
              </ArrowItem>
              <li>
                <strong>Site web :</strong> <a href="#">http://www.gendarmerie.interieur.gouv.fr<Ext /></a>
              </li>
            </ContactList>
          </ContactCard>

          <MapFrame>
            <MapTiles />
            <ZoomControl>
              <ZoomButton type="button" aria-label="Zoom avant">
                <svg width="12" height="12" stroke="currentColor" strokeWidth="2"><path d="M0 6h12M6 0v12" /></svg>
              </ZoomButton>
              <ZoomButton type="button" aria-label="Zoom arrière">
                <svg width="12" height="12" stroke="currentColor" strokeWidth="2"><path d="M0 6h12" /></svg>
              </ZoomButton>
            </ZoomControl>
            <Attribution>
              <a href="#">Leaflet</a> | <a href="#">© Les contributeurs OpenStreetMap</a> - <a href="#">géocodage IGN</a>
            </Attribution>
          </MapFrame>

          <AddressTitle>Adresse</AddressTitle>
          <Address>
            Avenue du Général de Gaulle
            <br />
            77440 Lizy-sur-Ourcq
          </Address>

          <Banner>
            <CalendarIcon />
            <BannerText>
              <h2>BESOIN DE NOUS CONTACTER ?</h2>
              <p>Veuillez décrire votre situation afin de répondre au mieux à votre demande</p>
            </BannerText>
            <BannerButton type="button">PRENDRE CONTACT</BannerButton>
          </Banner>

          <Notice>
            La rédaction de l’Annuaire recense et met à jour les coordonnées de l’administration et des services publics. Elle ne
            peut pas prendre en charge vos demandes d’information et de renseignement auprès des organismes eux-mêmes. Vous
            pouvez en revanche signaler à la rédaction de service-public.fr d'éventuelles erreurs présentes sur cette page :{" "}
            <a href="#">Écrire à la rédaction</a>
          </Notice>
          <ShareRow>
            {shares.map((s, i) => (
              <li key={i}>
                <ShareButton type="button">
                  {s.icon}
                  {s.label}
                </ShareButton>
              </li>
            ))}
          </ShareRow>
          <BackTop href="#">
            Retour en haut de page
            <BackTopIcon>
              <svg width="10" height="8" fill="none" stroke="currentColor" strokeWidth="1.500"><path d="M1 7l4-5 4 5" /></svg>
            </BackTopIcon>
          </BackTop>
        </Article>
      </Container>

      <footer>
        <FooterLinks>
          <FooterGrid>
            {columns.map((c) => (
              <FooterColumn key={c.title}>
                <h3>{c.title}</h3>
                <ul>
                  {c.links.map((l) => (
                    <li key={l.label}>
                      <a href="#">
                        {l.icon ? (
                          <>
                            <LinkGlyph>{l.icon}</LinkGlyph>
                            {l.label}
                          </>
                        ) : (
                          <PlainLabel>{l.label}</PlainLabel>
                        )}
                      </a>
                    </li>
                  ))}
                </ul>
              </FooterColumn>
            ))}
          </FooterGrid>
        </FooterLinks>
        <FooterBar $bg="#363b49" $pad="12px 0 13px">
          <a href="#">3939 Allo Service Public</a>
          {partners.map((p) => (
            <React.Fragment key={p}>
              <span>|</span>
              <a href="#">{p}<Ext /></a>
            </React.Fragment>
          ))}
        </FooterBar>
        <FooterBar $bg="#262832" $pad="12px 0 14px">
          <a href="#">Direction de l'information légale et administrative<Ext /></a>
          <span>-</span>
          <a href="#">Mentions légales</a>
          <span>-</span>
          <BadgeLink href="#"><RgaaBadge /></BadgeLink>
        </FooterBar>
      </footer>
    </>
  );
}
